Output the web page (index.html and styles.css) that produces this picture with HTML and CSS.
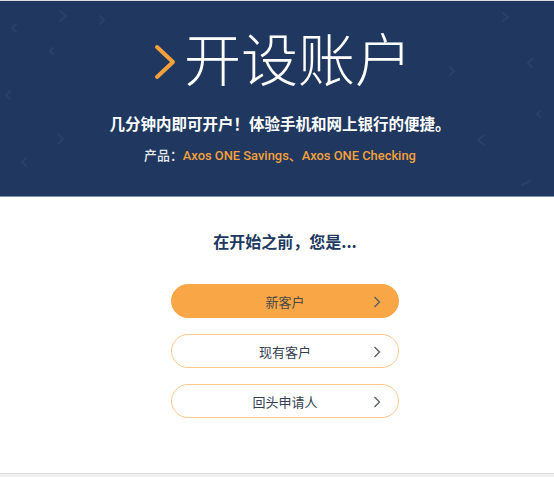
FILE: index.html
```html
<!DOCTYPE html>
<html lang="zh-CN">
<head>
    <meta charset="UTF-8">
    <meta name="viewport" content="width=device-width, initial-scale=1.0">
    <title>开设账户</title>
    <link rel="stylesheet" href="styles.css">
</head>
<body>
    <header class="hero">
        <!-- tło z chevronami -->
        <svg class="hero-pattern" width="554" height="196" viewBox="0 0 554 196">
            <g fill="none" stroke="#294269" stroke-width="2" stroke-linecap="round">
                <path d="M60 10 l6 5 l-6 5"/>
                <path d="M16 23 l-4 4 l4 4"/>
                <path d="M53 47 l-3 3 l3 3"/>
                <path d="M10 90 l-4 4 l4 4"/>
                <path d="M58 133 l5 5 l-5 5"/>
                <path d="M26 157 l-4 4 l4 4"/>
                <path d="M100 15 l4 4 l-4 4"/>
                <path d="M503 12 l5 4 l-5 4"/>
                <path d="M532 58 l-4 4 l4 4"/>
                <path d="M450 66 l4 4 l-4 4"/>
                <path d="M484 134 l-6 5 l6 5"/>
                <path d="M530 180 l-8 4"/>
                <path d="M540 110 l-3 3 l3 3"/>
            </g>
        </svg>
        <h1 class="hero-title">
            <svg class="title-chevron" width="22" height="36" viewBox="0 0 22 36">
                <path d="M3 3 L19 18 L3 33" fill="none" stroke="#f6a03a" stroke-width="4" stroke-linecap="round" stroke-linejoin="round"/>
            </svg>
            <span>开设账户</span>
        </h1>
        <p class="hero-lead">几分钟内即可开户！体验手机和网上银行的便捷。</p>
        <p class="hero-products">产品：<span class="product-names">Axos ONE Savings、Axos ONE Checking</span></p>
    </header>

    <main class="start">
        <h2 class="start-title">在开始之前，您是...</h2>

        <div class="choice-list">
            <a class="choice choice-primary" href="#">
                <span>新客户</span>
                <svg class="choice-arrow" width="8" height="12" viewBox="0 0 8 12"><path d="M1.5 1 L6.5 6 L1.5 11" fill="none" stroke="currentColor" stroke-width="1.3"/></svg>
            </a>
            <a class="choice" href="#">
                <span>现有客户</span>
                <svg class="choice-arrow" width="8" height="12" viewBox="0 0 8 12"><path d="M1.5 1 L6.5 6 L1.5 11" fill="none" stroke="currentColor" stroke-width="1.3"/></svg>
            </a>
            <a class="choice" href="#">
                <span>回头申请人</span>
                <svg class="choice-arrow" width="8" height="12" viewBox="0 0 8 12"><path d="M1.5 1 L6.5 6 L1.5 11" fill="none" stroke="currentColor" stroke-width="1.3"/></svg>
            </a>
        </div>
    </main>

    <footer class="page-footer"></footer>
</body>
</html>
```

FILE: styles.css
```css
body {
    margin: 0;
    font-family: Roboto, "Noto Sans CJK SC", sans-serif;
    background-color: #ffffff;
    border-top: 1px solid #d9dce2;
}
.hero {
    position: relative;
    background-color: #20385f;
    border-bottom: 1px solid #7f90ab;
    height: 195px;
    padding-left: 6px;
    text-align: center;
    overflow: hidden;
}
.hero-pattern {
    position: absolute;
    left: 0;
    top: 0;
}
.hero-title {
    position: relative;
    margin: 0;
    padding: 16px 0 0 6px;
    display: flex;
    justify-content: center;
    align-items: center;
    gap: 8px;
    color: #ffffff;
    font-family: "Noto Sans CJK SC", sans-serif;
    font-weight: 300;
    font-size: 57px;
    line-height: 78px;
}
.title-chevron {
    margin-top: 12px;
}
.hero-lead {
    position: relative;
    margin: 17px 0 0;
    color: #ffffff;
    font-family: "Noto Sans CJK SC", sans-serif;
    font-weight: 700;
    font-size: 15.5px;
    line-height: 22px;
}
.hero-products {
    position: relative;
    margin: 13px 0 0;
    color: #e6e9ee;
    font-size: 12.9px;
    font-weight: 500;
    line-height: 18px;
}
.product-names {
    color: #f6a03a;
}
.start {
    padding: 33px 0 55px 16px;
    text-align: center;
}
.start-title {
    margin: 0 0 32px;
    color: #20385f;
    font-family: "Noto Sans CJK SC", sans-serif;
    font-size: 16px;
    font-weight: 700;
    line-height: 22px;
}
.choice-list {
    display: flex;
    flex-direction: column;
    align-items: center;
    gap: 16px;
}
.choice {
    position: relative;
    box-sizing: border-box;
    width: 228px;
    height: 34px;
    display: flex;
    justify-content: center;
    align-items: center;
    border: 1px solid #fcc78a;
    border-radius: 17px;
    background-color: #ffffff;
    color: #343e52;
    font-family: "Noto Sans CJK SC", sans-serif;
    font-size: 13px;
    text-decoration: none;
}
.choice-primary {
    background-color: #f9a646;
    border-color: #f9a646;
    color: #4a4a4a;
}
.choice-arrow {
    position: absolute;
    right: 17px;
    top: 11px;
    color: #555a66;
}
.page-footer {
    border-top: 1px solid #dcdcdc;
    background-color: #f0f0f0;
    height: 10px;
}
```
